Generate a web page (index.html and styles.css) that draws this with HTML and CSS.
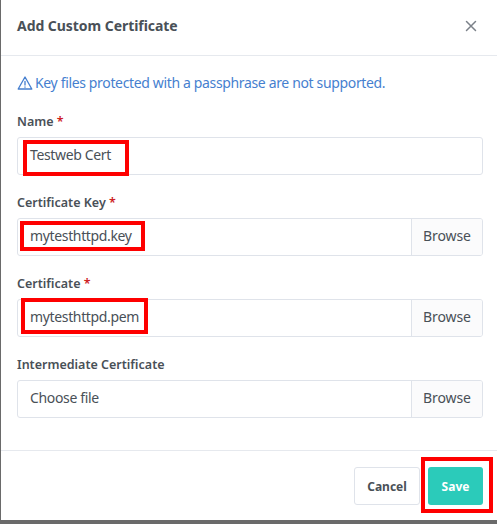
FILE: index.html
```html
<!DOCTYPE html>
<html lang="en">
<head>
    <meta charset="UTF-8">
    <meta name="viewport" content="width=device-width, initial-scale=1.0">
    <title>Add Custom Certificate</title>
    <link rel="stylesheet" href="styles.css">
</head>
<body>

    <div class="modal">
        <!-- Header -->
        <div class="modal-header">
            <h5 class="modal-title">Add Custom Certificate</h5>
            <svg class="close-icon" width="14" height="14" viewBox="0 0 14 14">
                <path d="M2.5 2.5L11.5 11.5M11.5 2.5L2.5 11.5" fill="none" stroke="#7b8189" stroke-width="1.5" stroke-linecap="round"/>
            </svg>
        </div>

        <!-- Form -->
        <div class="modal-body">
            <p class="alert-text">
                <svg class="alert-icon" width="16" height="16" viewBox="0 0 24 24">
                    <path d="M12 3L1.8 21h20.4z M12 9.5v5.5 M12 18v.2" fill="none" stroke="#467fcf" stroke-width="2" stroke-linecap="round" stroke-linejoin="round"/>
                </svg>
                Key files protected with a passphrase are not supported.
            </p>

            <div class="field">
                <label class="field-label">Name <span class="required">*</span></label>
                <div class="input-box">
                    <span class="input-value">Testweb Cert</span>
                </div>
                <div class="highlight highlight-name"></div>
            </div>

            <div class="field">
                <label class="field-label">Certificate Key <span class="required">*</span></label>
                <div class="input-box">
                    <span class="input-value">mytesthttpd.key</span>
                    <span class="browse">Browse</span>
                </div>
                <div class="highlight highlight-key"></div>
            </div>

            <div class="field">
                <label class="field-label">Certificate <span class="required">*</span></label>
                <div class="input-box">
                    <span class="input-value">mytesthttpd.pem</span>
                    <span class="browse">Browse</span>
                </div>
                <div class="highlight highlight-pem"></div>
            </div>

            <div class="field">
                <label class="field-label">Intermediate Certificate</label>
                <div class="input-box">
                    <span class="input-value">Choose file</span>
                    <span class="browse">Browse</span>
                </div>
            </div>
        </div>

        <!-- Footer -->
        <div class="modal-footer">
            <button class="btn btn-cancel">Cancel</button>
            <div class="save-wrap">
                <button class="btn btn-save">Save</button>
                <div class="highlight highlight-save"></div>
            </div>
        </div>
    </div>

</body>
</html>
```

FILE: styles.css
```css
body {
    font-family: "Noto Sans", "Open Sans", sans-serif;
    background-color: #6a6a6a;
    color: #495057;
    margin: 0;
    padding: 0;
    height: 524px;
    overflow: hidden;
}

.modal {
    margin-left: 1px;
    height: 520px;
    background-color: #fff;
    display: flex;
    flex-direction: column;
}

/* Header */
.modal-header {
    height: 51px;
    padding: 0 19px 4px 16px;
    border-bottom: 1px solid #e6e9ee;
    display: flex;
    align-items: center;
    justify-content: space-between;
    flex-shrink: 0;
}

.modal-title {
    margin: 0;
    font-size: 14px;
    font-weight: 700;
    letter-spacing: -0.05px;
}

/* Body */
.modal-body {
    flex: 1;
    padding: 17px 14px 0 16px;
}

.alert-text {
    margin: 0 0 18px;
    height: 20px;
    line-height: 20px;
    font-size: 14px;
    color: #467fcf;
    display: flex;
    align-items: center;
    gap: 2px;
    letter-spacing: -0.35px;
    white-space: nowrap;
}

.alert-icon {
    flex-shrink: 0;
}

.field {
    position: relative;
    margin-bottom: 17px;
}

.field-label {
    display: block;
    height: 20px;
    line-height: 22px;
    margin-bottom: 6px;
    font-size: 12.5px;
    font-weight: 600;
}

.required {
    color: #cd201f;
}

.input-box {
    height: 38px;
    box-sizing: border-box;
    border: 1px solid #dfe3ea;
    border-radius: 3px;
    display: flex;
    align-items: center;
    justify-content: space-between;
    font-size: 14px;
    overflow: hidden;
}

.input-value {
    padding-left: 12px;
    padding-bottom: 3px;
    letter-spacing: -0.35px;
}

.browse {
    height: 100%;
    width: 71px;
    box-sizing: border-box;
    padding-bottom: 3px;
    background-color: #fbfbfc;
    border-left: 1px solid #dfe3ea;
    display: flex;
    align-items: center;
    justify-content: center;
    letter-spacing: -0.1px;
}

/* Red annotation boxes drawn over the screenshot */
.highlight {
    position: absolute;
    box-sizing: border-box;
    border: 4px solid #fe0000;
}

.highlight-name {
    left: 6px;
    top: 29px;
    width: 106px;
    height: 36px;
}

.highlight-key {
    left: 3px;
    top: 29px;
    width: 125px;
    height: 30px;
}

.highlight-pem {
    left: 4px;
    top: 25px;
    width: 127px;
    height: 36px;
}

/* Footer */
.modal-footer {
    height: 70px;
    box-sizing: border-box;
    border-top: 1px solid #e6e9ee;
    padding: 16px 14px 0 0;
    display: flex;
    justify-content: flex-end;
    gap: 8px;
    flex-shrink: 0;
}

.btn {
    height: 38px;
    box-sizing: border-box;
    border-radius: 3px;
    font-family: inherit;
    font-size: 12px;
    font-weight: 700;
    cursor: pointer;
}

.btn-cancel {
    width: 66px;
    background-color: #fff;
    border: 1px solid #dfe3ea;
    color: #495057;
}

.btn-save {
    display: block;
    width: 55px;
    background-color: #2bcbba;
    border: none;
    color: #fff;
}

.save-wrap {
    position: relative;
}

.highlight-save {
    left: -7px;
    top: -10px;
    width: 72px;
    height: 56px;
}
```
